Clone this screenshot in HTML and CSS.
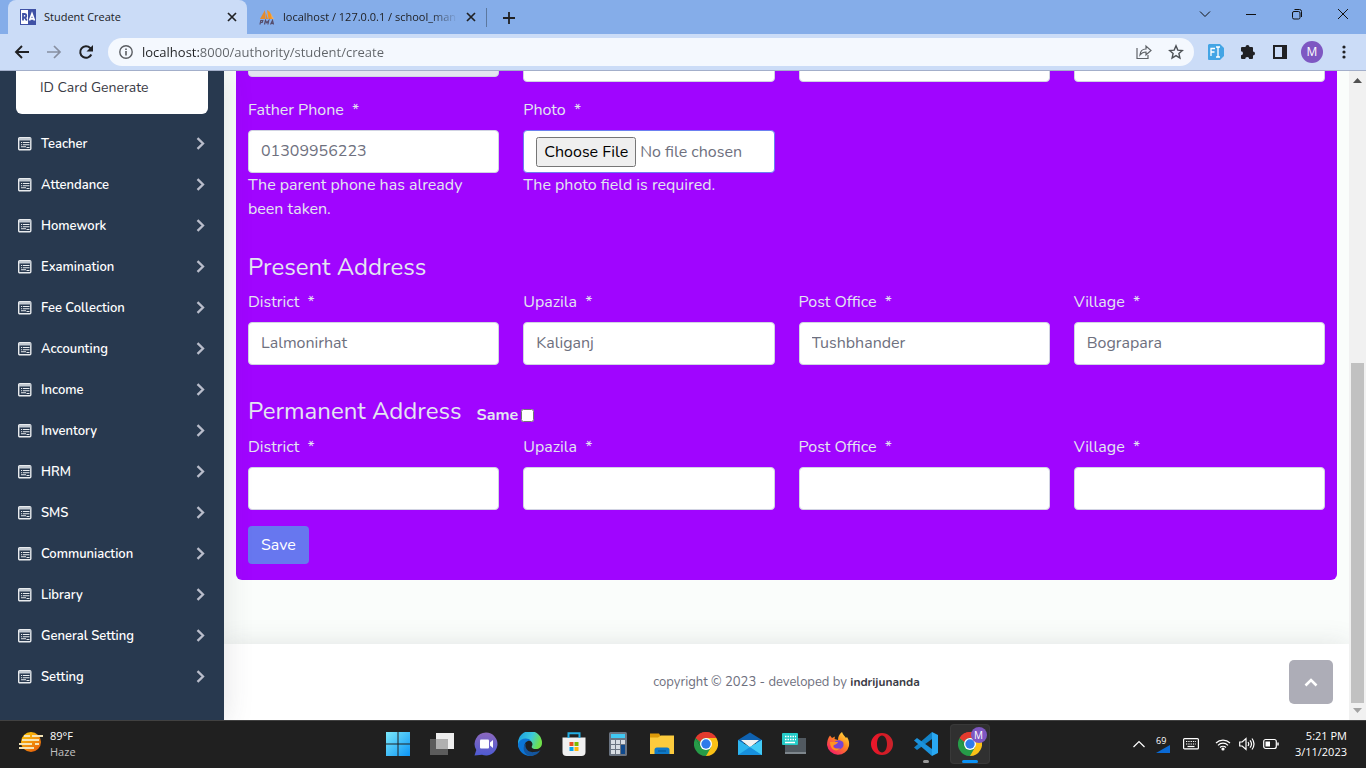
FILE: index.html
```html
<!DOCTYPE html>
<html lang="en">
<head>
<meta charset="utf-8">
<title>Student Create</title>
<link rel="stylesheet" href="styles.css">
</head>
<body>
<svg class="defs" aria-hidden="true">
  <symbol id="close" viewBox="0 0 10 10"><path d="M1 1l8 8M9 1L1 9" fill="none" stroke="#202124" stroke-width="1.7"/></symbol>
  <symbol id="news" viewBox="0 0 14 14"><rect x=".7" y=".7" width="12.100" height="12" rx="1" fill="none" stroke="#e8ebee" stroke-width="1.400"/><path d="M1 1h12v2.500H1z" fill="#c3cad2"/><path d="M3 5.500h1.200M5 5.500h6.500M3 7.700h1.200M5 7.700h6.500M3 9.700h5M8.500 10.500h3" stroke="#e8ebee" stroke-width="1.100"/></symbol>
  <symbol id="right" viewBox="0 0 9 13"><path d="M1.500 1.200l5.500 5.300-5.500 5.300" fill="none" stroke="#b9bdcb" stroke-width="2.300"/></symbol>
  <symbol id="chrome" viewBox="0 0 24 24"><path d="M12 12L1.600 6A12 12 0 0 1 22.400 6z" fill="#e33b2e"/><path d="M12 12V6h10.400A12 12 0 0 1 12 24z" fill="#fbc116"/><path d="M12 12l5.200 3L12 24A12 12 0 0 1 1.600 6L6.800 15z" fill="#269b48"/><path d="M1.600 6L6.800 15 12 12 12 6z" fill="#269b48"/><path d="M1.600 6A12 12 0 0 1 12 0a12 12 0 0 1 10.400 6H12a6 6 0 0 0-5.600 4z" fill="#e33b2e"/><circle cx="12" cy="12" r="6" fill="#fff"/><circle cx="12" cy="12" r="4.700" fill="#2f7bea"/></symbol>
</svg>

<header class="browser">
  <div class="tabstrip">
    <div class="tab tab-active">
      <svg class="favicon" viewBox="0 0 16 16"><path fill="#fff" d="M0 0h8v16H0z"/><path fill="#3f51a5" d="M8 0h8v16H8zM0 0h8v1H0zM0 0h1v16H0zM0 15h8v1H0z"/><path d="M3 11.500V5h1.500a1.600 1.600 0 0 1 0 3.500H3M4.800 8.500L6.800 11.500" fill="none" stroke="#3f51a5" stroke-width="1.800"/><path d="M9.500 11.500L12 4.800l2.500 6.700M10.500 9.800h3" fill="none" stroke="#fff" stroke-width="1.700"/></svg>
      <span class="tab-title">Student Create</span>
      <button class="tab-close" aria-label="Close tab"><svg width="10" height="10"><use href="#close"/></svg></button>
    </div>
    <div class="tab">
      <svg class="favicon" viewBox="0 0 16 16"><path d="M1 10L6 1v9zM6.500 10V3L9 10z" fill="#e58b2b"/><path d="M8 1c4 2 5 6 5 9H9.500z" fill="#f7941d"/><path d="M11.500 4l3.500 6h-2z" fill="#ecb068"/><path d="M1 15.500l.8-4h2l-.6 2H2M5.500 15.500l1-4 1.200 2.300 2-2.300-.8 4M11.500 15.500l2-4 1 4M12 14.300h2" fill="none" stroke="#554c6b" stroke-width="1.200"/></svg>
      <span class="tab-title tab-fade">localhost / 127.0.0.1 / school_man</span>
      <button class="tab-close" aria-label="Close tab"><svg width="10" height="10"><use href="#close"/></svg></button>
    </div>
    <button class="new-tab" aria-label="New tab"><svg width="12" height="12" viewBox="0 0 12 12"><path d="M6 0v12M0 6h12" stroke="#202124" stroke-width="1.800"/></svg></button>
    <div class="window-controls">
      <button aria-label="Search tabs"><svg width="12" height="12" viewBox="0 0 12 12"><path d="M1 3.500l5 5 5-5"/></svg></button>
      <button aria-label="Minimize"><svg width="12" height="12" viewBox="0 0 12 12"><path d="M1 6.500h10"/></svg></button>
      <button aria-label="Restore"><svg width="12" height="12" viewBox="0 0 12 12"><rect x="1.500" y="3.500" width="7.500" height="7.500" rx="1.500"/><path d="M3.500 1.500h5a2 2 0 0 1 2 2v5.500"/></svg></button>
      <button aria-label="Close"><svg width="12" height="12" viewBox="0 0 12 12"><path d="M1 1l10 10M11 1L1 11"/></svg></button>
    </div>
  </div>
  <div class="toolbar">
    <button class="nav-button" aria-label="Back"><svg width="16" height="16" viewBox="0 0 16 16"><path d="M15 8H2.500M8 2L2 8l6 6" fill="none" stroke="#202124" stroke-width="1.900"/></svg></button>
    <button class="nav-button" aria-label="Forward"><svg width="16" height="16" viewBox="0 0 16 16"><path d="M1 8h12.500M8 2l6 6-6 6" fill="none" stroke="#878fa1" stroke-width="1.700"/></svg></button>
    <button class="nav-button" aria-label="Reload"><svg width="16" height="16" viewBox="0 0 16 16"><path d="M13.300 10.500A5.800 5.800 0 1 1 12.200 4L13 5" fill="none" stroke="#202124" stroke-width="2"/><path d="M15 1v6.500H8.500z" fill="#202124"/></svg></button>
    <div class="omnibox">
      <svg width="14" height="14" viewBox="0 0 14 14"><circle cx="7" cy="7" r="6.200" fill="none" stroke="#5a5d62" stroke-width="1.400"/><path d="M7 6v4.500M7 3.500V5" stroke="#5a5d62" stroke-width="1.600"/></svg>
      <input class="address" aria-label="Address" value="localhost:8000/authority/student/create">
      <button aria-label="Share"><svg width="16" height="16" viewBox="0 0 16 16"><path d="M1 4v10.500h11V11M4 11c.3-4 2-6 6-6V2l5 4.500-5 4.500V8C7 8 5.500 9 4 11z" fill="none" stroke="#5f6368" stroke-width="1.200"/></svg></button>
      <button aria-label="Bookmark"><svg width="16" height="16" viewBox="0 0 16 16"><path d="M8 1.800l1.800 4.300 4.500.4-3.400 3 1 4.500L8 11.600 4.100 14l1-4.500-3.400-3 4.500-.4z" fill="none" stroke="#4d5156" stroke-width="1.400"/></svg></button>
    </div>
    <div class="extensions">
      <button aria-label="Form filler"><svg width="16" height="16" viewBox="0 0 16 16"><path d="M1 0h11l4 4v8l-4 4H1a1 1 0 0 1-1-1V1z" fill="#43a5e5"/><path d="M3 12V4.500h4M3 8h3.500M8 3h1.500L10 4v8l-.5 1H8M12 3h-1.500L10 4M12 13h-1.500L10 12" fill="none" stroke="#fff" stroke-width="1.300"/></svg></button>
      <button aria-label="Extensions"><svg width="16" height="16" viewBox="0 0 16 16"><path d="M1 4a1 1 0 0 1 1-1h3.500a2 2 0 0 1 4 0H12a1 1 0 0 1 1 1v3.500a2 2 0 0 1 0 4V14a1 1 0 0 1-1 1H9.200a2 2 0 0 0-4 0H2a1 1 0 0 1-1-1v-2.800a2 2 0 0 0 0-4z" fill="#202124"/></svg></button>
      <button aria-label="Side panel"><svg width="14" height="14" viewBox="0 0 14 14"><path d="M1 1h12v12H1z" fill="none" stroke="#202124" stroke-width="2"/><path d="M9 1h4v12H9z" fill="#202124"/></svg></button>
      <button class="profile" aria-label="Profile M">M</button>
      <button aria-label="Menu"><svg width="4" height="14" viewBox="0 0 4 14" fill="#202124"><circle cx="2" cy="2" r="1.600"/><circle cx="2" cy="7" r="1.600"/><circle cx="2" cy="12" r="1.600"/></svg></button>
    </div>
  </div>
</header>

<div class="page">
  <nav class="sidebar">
    <div class="submenu"><a href="#">ID Card Generate</a></div>
    <a class="nav-item" href="#"><svg width="14" height="14"><use href="#news"/></svg><span>Teacher</span><svg width="9" height="13"><use href="#right"/></svg></a>
    <a class="nav-item" href="#"><svg width="14" height="14"><use href="#news"/></svg><span>Attendance</span><svg width="9" height="13"><use href="#right"/></svg></a>
    <a class="nav-item" href="#"><svg width="14" height="14"><use href="#news"/></svg><span>Homework</span><svg width="9" height="13"><use href="#right"/></svg></a>
    <a class="nav-item" href="#"><svg width="14" height="14"><use href="#news"/></svg><span>Examination</span><svg width="9" height="13"><use href="#right"/></svg></a>
    <a class="nav-item" href="#"><svg width="14" height="14"><use href="#news"/></svg><span>Fee Collection</span><svg width="9" height="13"><use href="#right"/></svg></a>
    <a class="nav-item" href="#"><svg width="14" height="14"><use href="#news"/></svg><span>Accounting</span><svg width="9" height="13"><use href="#right"/></svg></a>
    <a class="nav-item" href="#"><svg width="14" height="14"><use href="#news"/></svg><span>Income</span><svg width="9" height="13"><use href="#right"/></svg></a>
    <a class="nav-item" href="#"><svg width="14" height="14"><use href="#news"/></svg><span>Inventory</span><svg width="9" height="13"><use href="#right"/></svg></a>
    <a class="nav-item" href="#"><svg width="14" height="14"><use href="#news"/></svg><span>HRM</span><svg width="9" height="13"><use href="#right"/></svg></a>
    <a class="nav-item" href="#"><svg width="14" height="14"><use href="#news"/></svg><span>SMS</span><svg width="9" height="13"><use href="#right"/></svg></a>
    <a class="nav-item" href="#"><svg width="14" height="14"><use href="#news"/></svg><span>Communiaction</span><svg width="9" height="13"><use href="#right"/></svg></a>
    <a class="nav-item" href="#"><svg width="14" height="14"><use href="#news"/></svg><span>Library</span><svg width="9" height="13"><use href="#right"/></svg></a>
    <a class="nav-item" href="#"><svg width="14" height="14"><use href="#news"/></svg><span>General Setting</span><svg width="9" height="13"><use href="#right"/></svg></a>
    <a class="nav-item" href="#"><svg width="14" height="14"><use href="#news"/></svg><span>Setting</span><svg width="9" height="13"><use href="#right"/></svg></a>
  </nav>

  <div class="content">
    <main class="main">
      <form class="card">
        <div class="row row-scrolled">
          <input class="control control-short" disabled aria-label="Parent">
          <input class="control" aria-label="Father name">
          <input class="control" aria-label="Mother name">
          <input class="control" aria-label="Occupation">
        </div>
        <div class="row">
          <div class="field"><label for="phone">Father Phone&nbsp; *</label><input class="control" id="phone" placeholder="01309956223"><p class="error">The parent phone has already been taken.</p></div>
          <div class="field"><label for="photo">Photo&nbsp; *</label><input class="control control-file" id="photo" type="file"><p class="error">The photo field is required.</p></div>
        </div>
        <div class="section-head"><h2>Present Address</h2></div>
        <div class="row">
          <div class="field"><label for="d1">District&nbsp; *</label><input class="control" id="d1" placeholder="Lalmonirhat"></div>
          <div class="field"><label for="u1">Upazila&nbsp; *</label><input class="control" id="u1" placeholder="Kaliganj"></div>
          <div class="field"><label for="p1">Post Office&nbsp; *</label><input class="control" id="p1" placeholder="Tushbhander"></div>
          <div class="field"><label for="v1">Village&nbsp; *</label><input class="control" id="v1" placeholder="Bograpara"></div>
        </div>
        <div class="section-head"><h2>Permanent Address</h2><div class="same"><label for="same">Same</label><input type="checkbox" id="same"></div></div>
        <div class="row">
          <div class="field"><label for="d2">District&nbsp; *</label><input class="control" id="d2"></div>
          <div class="field"><label for="u2">Upazila&nbsp; *</label><input class="control" id="u2"></div>
          <div class="field"><label for="p2">Post Office&nbsp; *</label><input class="control" id="p2"></div>
          <div class="field"><label for="v2">Village&nbsp; *</label><input class="control" id="v2"></div>
        </div>
        <button class="save" type="button">Save</button>
      </form>
    </main>
    <footer class="footer">
      <span>copyright © 2023 - developed by <b>indrijunanda</b></span>
      <a class="to-top" href="#" aria-label="Back to top"><svg width="14" height="9" viewBox="0 0 14 9"><path d="M1.500 7.500L7 2l5.500 5.500" fill="none" stroke="#fff" stroke-width="2.600"/></svg></a>
    </footer>
  </div>

  <div class="scrollbar" aria-hidden="true">
    <svg width="9" height="5" viewBox="0 0 9 5"><path d="M0 5L4.500 0 9 5z" fill="#505050"/></svg>
    <div class="track"><div class="thumb"></div></div>
    <svg width="9" height="5" viewBox="0 0 9 5"><path d="M0 0l4.500 5L9 0z" fill="#a3a3a3"/></svg>
  </div>
</div>

<div class="taskbar">
  <div class="weather">
    <svg width="24" height="24" viewBox="0 0 24 24"><defs><linearGradient id="sun" x2=".7" y2="1"><stop stop-color="#ffd10a"/><stop offset="1" stop-color="#e8620b"/></linearGradient></defs><circle cx="12" cy="12" r="10" fill="url(#sun)"/><path d="M5 6h6M13 6h11M3 10h17M0 14h13M16 14h4M0 18h15" stroke="#f3e3b5" stroke-width="1.800"/></svg>
    <div><div>89°F</div><div class="dim">Haze</div></div>
  </div>
  <div class="apps">
    <button aria-label="Start"><svg width="24" height="24" viewBox="0 0 24 24"><defs><linearGradient id="win" x2="1" y2="1"><stop stop-color="#7be9fb"/><stop offset="1" stop-color="#0c94f5"/></linearGradient></defs><path d="M0 0h11.500v11.500H0zM12.500 0H24v11.500H12.500zM0 12.500h11.500V24H0zM12.500 12.500H24V24H12.500z" fill="url(#win)"/></svg></button>
    <button aria-label="Task view"><svg width="24" height="24" viewBox="0 0 24 24"><path d="M6 1h18v16H6z" fill="#eee"/><path d="M0 7h18v16H0z" fill="#5c5c5c"/><path d="M6 7h12v10H6z" fill="#b0b0b0"/></svg></button>
    <button aria-label="Chat"><svg width="24" height="24" viewBox="0 0 24 24"><defs><linearGradient id="chat" x2="0" y2="1"><stop stop-color="#8c68bd"/><stop offset="1" stop-color="#4e5bd3"/></linearGradient></defs><path d="M12 .5a11.500 11.500 0 1 1-4 22.300L.5 23.500l1.800-5.500A11.500 11.500 0 0 1 12 .5z" fill="url(#chat)"/><rect x="6" y="7.500" width="9" height="9" rx="1" fill="#fff"/><path d="M16 10.500l3-2.500v8l-3-2.500z" fill="#fff"/></svg></button>
    <button aria-label="Edge"><svg width="24" height="24" viewBox="0 0 24 24"><defs><linearGradient id="edge" x2="1" y2=".3"><stop stop-color="#179be0"/><stop offset=".6" stop-color="#3bc9dd"/><stop offset="1" stop-color="#6fe04b"/></linearGradient></defs><path d="M0 11A12 12 0 0 1 24 11c0 4-3 6-6 6-3.500 0-5-1.500-4-3 2-4-3-7-7-5.500C3 9.500 1 13 1 16 0 14 0 12 0 11z" fill="url(#edge)"/><path d="M0 12c2-6 10-7 13-3-4-1-7 2-6.500 6C7 20 11 23 16 23.300 8 26 0 20 0 12z" fill="#0b75d6"/><path d="M8 11c-2 5 2 10 8 9 3 0 5-1 6.500-2A12 12 0 0 1 12 24C5 22 4 15 8 11z" fill="#14569e"/></svg></button>
    <button aria-label="Store"><svg width="24" height="24" viewBox="0 0 24 24"><path d="M.5 5.500h23V20a4 4 0 0 1-4 4h-15a4 4 0 0 1-4-4z" fill="#f0f0f0"/><path d="M6.500 6V1.200h11V6" fill="none" stroke="#23aee4" stroke-width="2"/><path d="M7.500 10h4v4h-4z" fill="#e94f24"/><path d="M12.500 10h4v4h-4z" fill="#7eb900"/><path d="M7.500 15h4v4h-4z" fill="#05a4ee"/><path d="M12.500 15h4v4h-4z" fill="#fdb70c"/></svg></button>
    <button aria-label="Calculator"><svg width="24" height="24" viewBox="0 0 24 24"><rect x="3" width="18" height="24" rx="1.500" fill="#6a7482"/><path d="M5 2h14v4H5z" fill="#41c8f2"/><path d="M5 8h4v4H5zM10 8h4v4h-4zM15 8h4v4h-4zM5 13h4v4H5zM10 13h4v4h-4zM5 18h4v4H5zM10 18h4v4h-4z" fill="#d6dce3"/><path d="M15 13h4v9h-4z" fill="#0e498d"/></svg></button>
    <button aria-label="File Explorer"><svg width="24" height="24" viewBox="0 0 24 24"><path d="M0 1.500h9l2 3h13V20H0z" fill="#dd9a09"/><path d="M0 5.500h8l3-2h13V22H0z" fill="#fccb3d"/><path d="M4.500 22v-4a2.500 2.500 0 0 1 2.500-2.500h10a2.500 2.500 0 0 1 2.500 2.500v4z" fill="#0e79c8"/><path d="M8 19h8" stroke="#07528c"/></svg></button>
    <button aria-label="Chrome"><svg width="24" height="24"><use href="#chrome"/></svg></button>
    <button aria-label="Mail"><svg width="24" height="24" viewBox="0 0 24 24"><path d="M0 8l12-7.500L24 8v3H0z" fill="#0f62b1"/><path d="M3 8h18l-9 7.500z" fill="#f2f2f2"/><path d="M0 8l12 7 12-7v15H0z" fill="#2eb5ef"/><path d="M12 15l12 8H0z" fill="#1790dd"/><path d="M12 15l12-7v15z" fill="#43cbf6"/></svg></button>
    <button aria-label="Keyboard app"><svg width="24" height="24" viewBox="0 0 24 24"><path d="M3 6h21v15H3z" fill="#515960"/><path d="M3 20h21v2H3z" fill="#7e868c"/><rect y="1" width="16" height="12" rx="1" fill="#25cbc8"/><path d="M3 4.500h11M3 7.500h11" stroke="#fff" stroke-width="1.500" stroke-dasharray="1.500 1"/><path d="M3 10.500h10" stroke="#fff" stroke-width="1.500"/></svg></button>
    <button aria-label="Firefox"><svg width="24" height="24" viewBox="0 0 24 24"><defs><linearGradient id="fox" x1="1" x2=".2" y2="1"><stop stop-color="#fff04a"/><stop offset=".45" stop-color="#ff8a1e"/><stop offset="1" stop-color="#f5156b"/></linearGradient></defs><path d="M1 13C1 9 2 6 4 3.500L6 6l3-1.500L8.500 7 12 8c0-3 1-6 4-8 1 3 3 4 4 6l1-1c2 3 2.500 6 2 9a11.200 11.200 0 0 1-22-1z" fill="url(#fox)"/><path d="M8 11c1-3 6-4 9-1 2 5-2 8-6 7-3-1-4-3-3-6z" fill="#7644d1"/><path d="M4 10l8 0c-1 3-4 2-5 4 0 3 5 3 7 2-3 5-10 2-10-6z" fill="#ff941f"/></svg></button>
    <button aria-label="Opera"><svg width="24" height="24" viewBox="0 0 24 24"><defs><linearGradient id="opera" x2="1"><stop stop-color="#f0162c"/><stop offset=".5" stop-color="#d81a25"/><stop offset="1" stop-color="#c9232b"/></linearGradient></defs><path fill-rule="evenodd" d="M12 1a11 11 0 1 0 0 22 11 11 0 0 0 0-22zm0 2.500c3 0 5 4 5 8.500s-2 8.500-5 8.500S7 16.500 7 12s2-8.500 5-8.500z" fill="url(#opera)"/></svg></button>
    <button class="running" aria-label="Visual Studio Code"><svg width="24" height="24" viewBox="0 0 24 24"><path d="M18 0l6 3v18l-6 3z" fill="#29a8f2"/><path d="M18 0v7L3 18l-3-2.500z" fill="#1283c8"/><path d="M18 24v-7L3 6 0 8.500z" fill="#1b92dc"/></svg></button>
    <button class="current" aria-label="Chrome, student create"><svg width="24" height="24"><use href="#chrome"/></svg><span class="badge">M</span></button>
  </div>
  <div class="tray">
    <button aria-label="Hidden icons"><svg width="14" height="14" viewBox="0 0 14 14"><path d="M1.500 10L7 4.500l5.500 5.500"/></svg></button>
    <div class="meter"><span>69</span><svg width="14" height="8" viewBox="0 0 14 8"><path class="solid" d="M0 8L14 0v8z"/></svg></div>
    <button class="keyboard" aria-label="Touch keyboard"><svg width="16" height="12" viewBox="0 0 16 12"><rect x=".6" y=".6" width="14.800" height="10.300" rx="1"/><path d="M3 3.500h10M3 6h10" stroke-dasharray="1.300 1"/><path d="M4.500 8.500h7"/></svg></button>
    <button aria-label="Network"><svg width="16" height="14" viewBox="0 0 16 14"><path d="M1 6a10 10 0 0 1 14 0M3 8.300a7 7 0 0 1 10 0M5 10.500a4.300 4.300 0 0 1 6 0"/><circle cx="8" cy="12" r="1" fill="#fff"/></svg></button>
    <button aria-label="Volume"><svg width="16" height="14" viewBox="0 0 16 14"><path d="M.7 5h2.500L7 1.500v11L3.200 9H.7zM9 5q1.500 2 0 4M11 3.300q3 3.700 0 7.400M13 1.500q4 5.500 0 11"/></svg></button>
    <button aria-label="Battery"><svg width="16" height="12" viewBox="0 0 16 12"><rect x=".7" y="1.500" width="12.600" height="9" rx="2"/><path d="M15 4.500v3" stroke-width="1.500"/><path d="M2.500 3.500H7v5H2.500z" fill="#fff" stroke="none"/></svg></button>
    <div class="clock"><div>5:21 PM</div><div>3/11/2023</div></div>
  </div>
</div>
</body>
</html>
```
FILE: styles.css
```css
* { box-sizing: border-box; }
body { margin: 0; height: 100vh; display: flex; flex-direction: column; overflow: hidden; font-family: Nunito, Lato, sans-serif; font-size: 16px; line-height: 24px; color: #e3e6f0; }
button { border: 0; padding: 0; background: none; color: inherit; font: inherit; display: flex; align-items: center; justify-content: center; }
svg { display: block; flex: none; }
a { color: inherit; text-decoration: none; }
.defs { position: absolute; width: 0; height: 0; }

.browser, .taskbar { font-family: "Segoe UI", "Open Sans", sans-serif; font-size: 12px; line-height: 16px; flex: none; }
.browser { background: #cbdcf7; border-bottom: 1px solid #a3afca; color: #202124; }
.tabstrip { display: flex; align-items: stretch; height: 34px; padding-left: 8px; background: #85ade9; }
.tab { display: flex; align-items: center; gap: 8px; width: 239px; padding: 0 10px 0 12px; }
.tab-active { background: #cbdcf7; border-radius: 8px 8px 0 0; }
.favicon { width: 16px; height: 16px; }
.tab-title { flex: 1; white-space: nowrap; overflow: hidden; font-size: 11px; }
.tab-fade { mask-image: linear-gradient(to right, #000 84%, transparent); }
.new-tab { width: 44px; border-left: 1px solid #5c789f; margin: 8px 0 7px; }
.window-controls { display: flex; margin-left: auto; align-items: center; height: 28px; }
.window-controls button { width: 46px; height: 28px; }
.window-controls svg { fill: none; stroke: #111; stroke-width: 1; }
.toolbar { display: flex; align-items: center; height: 36px; padding: 0 6px; }
.nav-button { width: 32px; height: 28px; }
.omnibox { flex: 1; display: flex; align-items: center; gap: 9px; height: 28px; margin-left: 6px; padding: 0 10px 0 11px; border-radius: 14px; background: #f4f8fe; }
.omnibox button { width: 16px; height: 16px; margin-left: 7px; }
.address { flex: 1; min-width: 0; border: 0; padding: 0; outline: 0; font: inherit; font-size: 13px; line-height: 18px; color: transparent; background: linear-gradient(to right, #202124 57px, #5f6368 57px); background-clip: text; }
.extensions { display: flex; align-items: center; margin-left: 6px; }
.extensions button { width: 32px; height: 24px; }
.extensions .profile { width: 22px; height: 22px; margin: 0 5px; border-radius: 11px; background: #7e57c2; color: #fff; font-size: 12px; }

.page { flex: 1; min-height: 0; display: flex; overflow: hidden; background: #fafdfb; }
.sidebar { flex: none; width: 224px; background: #28394f; box-shadow: 0 2px 28px rgba(58, 59, 69, .15); color: #fff; font-size: 13px; line-height: 20px; font-weight: 600; z-index: 1; }
.submenu { height: 43px; margin: 0 16px 9px; padding: 7px 24px; background: #fff; border-radius: 0 0 6px 6px; color: #3a3b45; font-size: 14px; font-weight: 400; }
.nav-item { display: flex; align-items: center; gap: 9px; height: 41px; padding: 0 19px 0 18px; }
.nav-item span { flex: 1; }

.content { flex: 1; min-width: 0; display: flex; flex-direction: column; }
.main { flex: 1; padding: 0 12px; }
.card { padding: 0 12px 16px; background: #a005ff; border-radius: 0 0 6px 6px; overflow: hidden; }
.row { display: grid; grid-template-columns: repeat(4, minmax(0, 1fr)); gap: 24px; margin-bottom: 16px; }
.row-scrolled { margin-top: -32px; }
.field label { display: block; margin-bottom: 8px; }
.control { display: block; width: 100%; height: 43px; padding: 6px 12px 8px; border: 1px solid #d1d3e2; border-radius: 4px; background: #fff; color: #6e707e; font: inherit; }
.control::placeholder { color: #6e707e; }
.control-short { height: 38px; background: #e3e6f0; }
.control-file { padding: 6px 12px; border-color: #6c7ff0; }
.control-file::file-selector-button { height: 30px; font: inherit; }
.error { margin: 0; }
.section-head { display: flex; align-items: flex-start; gap: 15px; margin: 32px 0 8px; }
.section-head h2 { margin: 0; font-size: 24px; line-height: 29px; font-weight: 400; }
.same { display: flex; align-items: center; gap: 3px; padding-top: 6px; font-weight: 700; }
.same input { width: 13px; height: 13px; margin: 0; }
.save { height: 38px; padding: 0 13px; border-radius: 4px; background: #6777ef; color: #fff; }
.footer { flex: none; display: grid; grid-template-columns: 1fr auto 1fr; align-items: center; height: 76px; padding: 0 16px; background: #fff; box-shadow: 0 2px 28px rgba(58, 59, 69, .15); color: #6e707e; font-size: 13px; line-height: 16px; }
.footer span { grid-column: 2; }
.footer b { color: #3a3b45; font-size: 12px; font-weight: 700; }
.to-top { display: flex; align-items: center; justify-content: center; justify-self: end; width: 44px; height: 44px; border-radius: 5px; background: #adadb7; }
.scrollbar { flex: none; display: flex; flex-direction: column; align-items: center; width: 17px; padding: 7px 0; background: #f1f1f1; z-index: 1; }
.track { flex: 1; display: flex; align-items: flex-end; padding: 5px 0; }
.thumb { width: 13px; height: 340px; background: #c1c1c1; }

.taskbar { display: grid; grid-template-columns: 1fr auto 1fr; height: 48px; padding-bottom: 1px; border-top: 1px solid #414141; background: #202020; color: #fff; font-size: 11px; }
.weather { display: flex; align-items: center; gap: 7px; padding-left: 19px; }
.weather svg { margin-bottom: 5px; }
.dim { color: #c2c2c2; }
.apps { display: flex; align-items: center; gap: 4px; padding-left: 1px; }
.apps button { position: relative; width: 40px; height: 40px; border-radius: 4px; }
.apps .current { background: #303030; outline: 1px solid #393939; outline-offset: -1px; }
.running::after, .current::after { content: ""; position: absolute; bottom: 1px; width: 6px; height: 3px; border-radius: 2px; background: #9a9a9a; }
.current::after { width: 16px; background: #0a91f5; }
.badge { position: absolute; top: 3px; right: 3px; width: 16px; height: 16px; border-radius: 8px; background: #7e57c2; font-size: 10px; line-height: 16px; }
.tray { display: flex; align-items: center; justify-content: flex-end; padding-right: 19px; }
.tray button { width: 24px; height: 32px; }
.tray svg { fill: none; stroke: #fff; stroke-width: 1.2; }
.tray .keyboard { width: 32px; margin-right: 4px; }
.tray .solid { fill: #0a6ad6; stroke: none; }
.meter { width: 24px; padding: 0 5px; font-size: 9px; line-height: 9px; }
.clock { width: 64px; text-align: right; }
```
